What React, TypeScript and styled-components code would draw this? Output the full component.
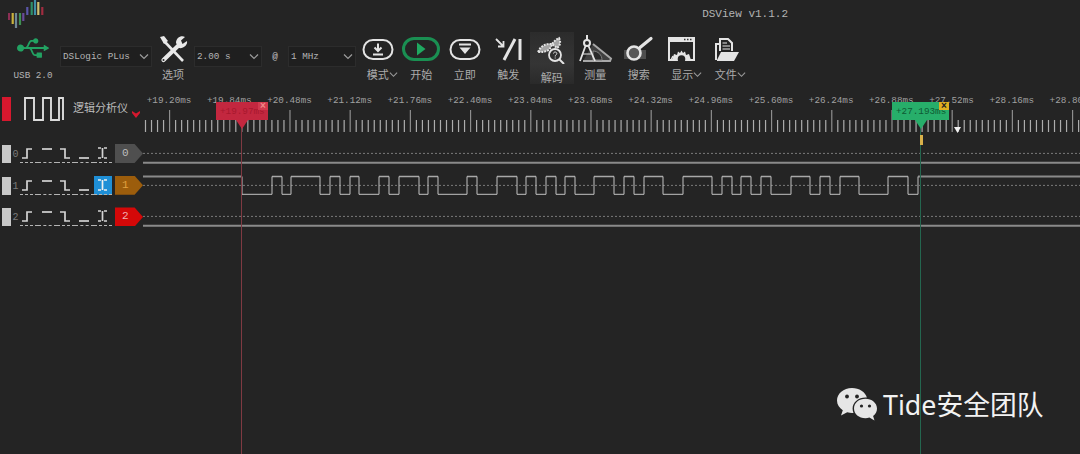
import React from 'react'
import styled, { createGlobalStyle } from 'styled-components'
import { FaUsb } from 'react-icons/fa'

const GlobalStyle = createGlobalStyle`
  html, body {
    margin: 0;
    padding: 0;
    background: #242424;
  }
`

const Page = styled.div`
  position: relative;
  width: 1080px;
  height: 454px;
  overflow: hidden;
  background: #242424;
  color: #c4c4c4;
  font-family: 'Liberation Mono', 'Noto Sans CJK SC', monospace;
  font-size: 9.3px;
`

const TitleBar = styled.header`
  display: flex;
  justify-content: space-between;
  height: 34px;
  padding: 0 292px 0 8px;
`

const Title = styled.div`
  padding-top: 8px;
  font-size: 11px;
  line-height: 13px;
  color: #b4b4b4;
`

const Toolbar = styled.div`
  display: flex;
  height: 56px;
  padding-left: 13px;
`

const UsbGroup = styled.div`
  display: flex;
  flex-direction: column;
  align-items: center;
  flex: none;
  width: 40px;
  margin-right: 7px;
  color: #22a262;

  svg {
    flex: none;
    width: 32px;
    height: 26px;
    margin-top: 1px;
  }

  span {
    margin-top: 8px;
    color: #b4b4b4;
    line-height: 14px;
    white-space: nowrap;
  }
`

const Select = styled.div<{ $w: number }>`
  display: flex;
  align-items: center;
  justify-content: space-between;
  flex: none;
  box-sizing: border-box;
  width: ${(p) => p.$w}px;
  height: 21px;
  margin-top: 12px;
  padding: 0 2px;
  background: #1f1f1f;
  border: 1px solid #2c2c2c;
  color: #b4b4b4;
  white-space: nowrap;
`

const Chevron = styled.svg`
  flex: none;
  width: 10px;
  height: 7px;
  fill: none;
  stroke: #9c9c9c;
  stroke-width: 1.2;
`

const At = styled.span`
  flex: none;
  width: 26px;
  margin-top: 16px;
  text-align: center;
  line-height: 14px;
`

const ToolButton = styled.div<{ $active?: boolean; $w?: number }>`
  display: flex;
  flex-direction: column;
  align-items: center;
  flex: none;
  width: ${(p) => p.$w ?? 43.5}px;
  height: 52px;
  margin-top: -2px;
  padding-top: 2px;
  box-sizing: border-box;
  background: ${(p) => (p.$active ? 'linear-gradient(#2c2c2c, #353535 60%, #2a2a2a)' : 'transparent')};
  font-family: 'Noto Sans CJK SC', sans-serif;
  font-size: 11px;
  color: #ababab;

  svg.icon {
    display: block;
    flex: none;
    width: 38px;
    height: 30px;
    fill: none;
    stroke: #e4e4e4;
    stroke-width: 2;
  }

  span {
    display: flex;
    align-items: center;
    margin-top: ${(p) => (p.$active ? 6 : 3)}px;
    line-height: 15px;
  }

  span ${Chevron} {
    width: 9px;
    margin-right: -9px;
  }
`

const Ruler = styled.div`
  display: flex;
  height: 53px;
`

const ChannelHead = styled.div`
  display: flex;
  align-items: flex-start;
  flex: none;
  width: 143px;
  height: 53px;
  padding-top: 7px;
  box-sizing: border-box;
`

const ModeSwatch = styled.div`
  flex: none;
  width: 9px;
  height: 24px;
  margin: 0 13px 0 2px;
  background: #d6182e;
`

const ModeName = styled.span`
  margin: 3px 0 0 9px;
  font-family: 'Noto Sans CJK SC', sans-serif;
  font-size: 11px;
  line-height: 14px;
  white-space: nowrap;
  color: #bcbcbc;
`

const ModeArrow = styled.svg`
  flex: none;
  width: 8px;
  height: 7px;
  margin: 14px 0 0 4px;
  fill: #d6182e;
`

const Scale = styled.div`
  flex: 1;
  min-width: 0;
  overflow: hidden;
`

const ScaleLabels = styled.div`
  display: flex;
  height: 20px;
  margin-left: -4px;
  padding-top: 5px;
  box-sizing: border-box;
  color: #a0a0a0;
  line-height: 12px;

  span {
    flex: none;
    width: 60.2px;
    text-align: center;
    white-space: nowrap;
  }
`

const Ticks = styled.svg`
  display: block;
  width: 937px;
  height: 33px;
`

const Row = styled.div`
  display: flex;
  height: 31.7px;
`

const ChannelCtl = styled.div`
  display: flex;
  align-items: flex-start;
  flex: none;
  width: 143px;
  padding-top: 1px;
  box-sizing: border-box;
`

const Handle = styled.div`
  flex: none;
  width: 9px;
  height: 18px;
  margin: 1px 0 0 2px;
  background: #c8c8c8;
`

const Index = styled.span`
  flex: none;
  width: 9px;
  margin-top: 5px;
  color: #7c7c7c;
  font-size: 10px;
  text-align: center;
  line-height: 12px;
`

const Triggers = styled.div`
  display: flex;
  flex: none;
  width: 92px;
  height: 20px;
  margin-right: 3px;
`

const TrigCell = styled.div<{ $on?: boolean }>`
  flex: none;
  width: 18.4px;
  height: 18px;
  background: ${(p) => (p.$on ? '#1f8fd6' : 'transparent')};
  border-bottom: 1px dashed #b4b4b4;

  svg {
    display: block;
    width: 18px;
    height: 18px;
    fill: none;
    stroke: ${(p) => (p.$on ? '#f0f0f0' : '#d4d4d4')};
    stroke-width: 1.7;
  }
`

const Tag = styled.div<{ $bg: string; $fg: string }>`
  flex: none;
  width: 28px;
  height: 19px;
  background: ${(p) => p.$bg};
  color: ${(p) => p.$fg};
  clip-path: polygon(0 0, 70% 0, 100% 50%, 70% 100%, 0 100%);
  line-height: 19px;
  text-indent: 7px;
  font-size: 11px;
`

const Trace = styled.svg`
  display: block;
  flex: 1;
  min-width: 0;
  height: 31.7px;
  fill: none;
`

const Cursor = styled.div<{ $x: number; $color: string }>`
  position: absolute;
  left: ${(p) => p.$x}px;
  top: 128px;
  bottom: 0;
  width: 1px;
  background: ${(p) => p.$color};
`

const Flag = styled.div<{ $x: number; $w: number; $tip: number; $bg: string; $fg: string }>`
  position: absolute;
  left: ${(p) => p.$x}px;
  top: 102px;
  width: ${(p) => p.$w}px;
  height: 18px;
  padding-left: 4px;
  box-sizing: border-box;
  background: ${(p) => p.$bg};
  color: ${(p) => p.$fg};
  font-size: 9.3px;
  line-height: 20px;
  white-space: nowrap;

  &::after {
    content: '';
    position: absolute;
    top: 100%;
    left: ${(p) => p.$tip}px;
    border: 6px solid transparent;
    border-top: 9px solid ${(p) => p.$bg};
    border-bottom: 0;
  }
`

const FlagClose = styled.i<{ $bg: string; $fg: string }>`
  position: absolute;
  right: 0;
  top: 0;
  width: 10px;
  height: 8px;
  background: ${(p) => p.$bg};
  color: ${(p) => p.$fg};
  font: bold 10px/8px 'Liberation Sans', sans-serif;
  text-align: center;
`

const TriggerMark = styled.div`
  position: absolute;
  left: 920px;
  top: 135px;
  width: 3px;
  height: 10px;
  background: #d8b04a;
`

const PosMark = styled.svg`
  position: absolute;
  left: 954px;
  top: 127px;
  width: 7px;
  height: 6px;
  fill: #f0f0f0;
`

const Watermark = styled.div`
  position: absolute;
  left: 836px;
  top: 386px;
  display: flex;
  align-items: center;
  gap: 5px;
  color: #f2f2f2;
  font-family: 'Noto Sans', 'Noto Sans CJK SC', sans-serif;
  font-size: 26.8px;
  line-height: 38px;
  white-space: nowrap;

  svg {
    flex: none;
    width: 42px;
    height: 36px;
    fill: #e6e6e6;
  }
`

const scaleValues = [
  '19.20', '19.84', '20.48', '21.12', '21.76', '22.40', '23.04', '23.68',
  '24.32', '24.96', '25.60', '26.24', '26.88', '27.52', '28.16', '28.80',
]

const edges = [
  272, 282, 291, 320, 330, 340, 350, 359, 379, 389, 399, 419, 428, 438, 467, 477,
  497, 517, 526, 536, 546, 556, 565, 575, 594, 614, 624, 634, 644, 663, 683, 712,
  722, 732, 741, 751, 761, 771, 791, 810, 820, 830, 840, 859, 888, 908, 918,
]

const TRACE_LEFT = 143
const TOP_Y = 1.5
const LOW_Y = 19.5

// edges alternate rising, falling, ... after the first drop at the red cursor
const buildWave = () => {
  let low = `M${242 - TRACE_LEFT} ${TOP_Y}V${LOW_Y}`
  let high = ''
  edges.forEach((edge, i) => {
    const x = edge - TRACE_LEFT
    if (i % 2 === 0) {
      low += `H${x}V${TOP_Y}`
      high += `M${x} ${TOP_Y}`
    } else {
      high += `H${x}`
      low += `M${x} ${TOP_Y}V${LOW_Y}`
    }
  })
  return { low, high }
}

const wave = buildWave()

const tickList = Array.from({ length: 156 }, (_, i) => i)

const ChevronDown = () => (
  <Chevron viewBox="0 0 10 7">
    <path d="M1 1.5L5 5.5L9 1.5" />
  </Chevron>
)

const Tools = () => (
  <svg className="icon" viewBox="0 0 38 30">
    <path d="M10 7L29 27" stroke="#e8e8e8" strokeWidth="2.6" />
    <path d="M6 3L10 2L14 7L10 10Z" fill="#e8e8e8" stroke="none" />
    <path d="M9.500 26L25 11" stroke="#e8e8e8" strokeWidth="4.200" strokeLinecap="round" />
    <path d="M22 9C22 4 27 1 31 3L27 6.500L28.500 10L33 7C34 11 29 15 25 14Z" fill="#e8e8e8" stroke="none" />
    <circle cx="9.500" cy="26" r="1" fill="#242424" stroke="none" />
  </svg>
)

const ModeIcon = () => (
  <svg className="icon" viewBox="0 0 38 30">
    <rect x="4.500" y="6" width="29" height="19" rx="9.500" />
    <path d="M19 9.500V16.500M15.500 13.500L19 17L22.500 13.500" />
    <path d="M14 20.500H24" />
  </svg>
)

const StartIcon = () => (
  <svg className="icon" viewBox="0 0 38 30">
    <rect x="1.500" y="4.500" width="35" height="21" rx="10.500" stroke="#1a8f52" strokeWidth="3" />
    <path d="M15 8.500L23.500 15L15 21.500Z" fill="#1fa860" stroke="none" />
  </svg>
)

const InstantIcon = () => (
  <svg className="icon" viewBox="0 0 38 30">
    <rect x="4.500" y="6" width="29" height="19" rx="9.500" />
    <path d="M13 10.500H25" />
    <path d="M13.500 13.500H24.500L19 20Z" fill="#e4e4e4" stroke="none" />
  </svg>
)

const TriggerIcon = () => (
  <svg className="icon" viewBox="0 0 38 30">
    <path d="M7 5L14 12M9 12.500H14.500V7" strokeWidth="1.800" />
    <path d="M15 26L26 5" strokeWidth="3" />
    <path d="M31 5V26" strokeWidth="3" />
  </svg>
)

const DecodeIcon = () => (
  <svg className="icon" viewBox="0 0 38 30" strokeWidth="1.200">
    <path d="M5 18Q9 9 19 10Q17 19 5 18Z" fill="#a4a4a4" strokeDasharray="2 1" />
    <path d="M19 10Q22 6 26 4Q29 10 24 14Z" fill="#a4a4a4" strokeDasharray="2 1" />
    <circle cx="22" cy="21" r="6" fill="#2f2f2f" strokeWidth="1.800" />
    <path d="M20.500 19.500C20.500 17.500 23.800 17.500 23.800 19.500C23.800 20.800 22.200 20.800 22.200 22.500M22.200 23.500V24.500" strokeWidth="1" />
    <path d="M26.500 25.500L31 30" strokeWidth="2" />
  </svg>
)

const MeasureIcon = () => (
  <svg className="icon" viewBox="0 0 38 30" strokeWidth="1.400">
    <path d="M17 10L35 24.500L34 27H7" fill="#404040" stroke="#a8a8a8" />
    <path d="M17 17C22 17 26 21 26 26H17Z" fill="#2a2a2a" stroke="#808080" strokeWidth="1" />
    <path d="M11 1V6" />
    <circle cx="11" cy="9" r="3" />
    <path d="M9.500 12L4 27M12.500 12L19 27" strokeWidth="1.800" />
    <path d="M7 20L15 20" strokeWidth="1" />
  </svg>
)

const SearchIcon = () => (
  <svg className="icon" viewBox="0 0 38 30">
    <rect x="4" y="16" width="22" height="9" fill="#4e4e4e" stroke="none" />
    <circle cx="14" cy="19" r="6.500" strokeWidth="2.600" fill="#575757" />
    <path d="M20 13.500L31 4.500" strokeWidth="3.200" strokeLinecap="round" />
  </svg>
)

const DisplayIcon = () => (
  <svg className="icon" viewBox="0 0 38 30">
    <rect x="6" y="4" width="25" height="22" strokeWidth="2" />
    <path d="M6 3H32V8H6Z" fill="#e4e4e4" stroke="none" />
    <path d="M24 5.500H25.500M27 5.500H28.500M21 5.500H22.500" stroke="#333" strokeWidth="1.500" />
    <path d="M9 26L11 20L14 21L15 17.500L17 19L18.500 16.500L20 19L22 17.500L23 21L26 20L28 26Z" fill="#e4e4e4" stroke="none" />
    <path d="M8 26L10 22" strokeWidth="1.500" />
    <circle cx="18.500" cy="25" r="3.800" fill="#242424" stroke="none" />
  </svg>
)

const FileIcon = () => (
  <svg className="icon" viewBox="0 0 38 30" strokeWidth="1.600">
    <path d="M13 17V5H21L25 9V17" />
    <path d="M15.500 9H20M15.500 12H23M15.500 15H23" strokeWidth="1.200" />
    <path d="M9 26V10H12" />
    <path d="M10 26L14 18H32L27 27H10Z" fill="#e4e4e4" stroke="none" />
  </svg>
)

const logoBars = [
  { x: 1, y1: 13, y2: 20, c: '#8d2f55' },
  { x: 4.700, y1: 13, y2: 24, c: '#c9b23d' },
  { x: 8, y1: 13, y2: 28, c: '#6f8796' },
  { x: 12, y1: 13, y2: 25, c: '#3f8f52' },
  { x: 15.300, y1: 13, y2: 21, c: '#6a4a9a' },
  { x: 19.300, y1: 7, y2: 15, c: '#5a55a8' },
  { x: 23.700, y1: 2, y2: 15, c: '#2f8f6a' },
  { x: 27, y1: 0, y2: 15, c: '#3f8fa8' },
  { x: 30.300, y1: 2, y2: 15, c: '#d0c070' },
  { x: 34.300, y1: 7, y2: 15, c: '#a02c40' },
]

const Logo = () => (
  <svg width="37" height="31" viewBox="0 0 37 31" fill="none" strokeWidth="2.200">
    {logoBars.map((b) => (
      <path key={b.x} d={`M${b.x} ${b.y1}V${b.y2}`} stroke={b.c} />
    ))}
  </svg>
)

const triggerPaths = [
  'M2 14H7V5H12',
  'M4 5H14',
  'M3 5H8V14H13',
  'M4 14H14',
  'M4 4H7M10 4H13M8.500 4V14M4 14H7M10 14H13',
]

const channels = [
  { id: 0, bg: '#4f4f4f', fg: '#bdbdbd', line: 20 },
  { id: 1, bg: '#9c5d0c', fg: '#e0a040', line: 0 },
  { id: 2, bg: '#d40808', fg: '#f0b0b0', line: 20 },
]

const App = () => (
  <Page>
    <GlobalStyle />
    <TitleBar>
      <Logo />
      <Title>DSView v1.1.2</Title>
    </TitleBar>

    <Toolbar>
      <UsbGroup>
        <FaUsb />
        <span>USB 2.0</span>
      </UsbGroup>
      <Select $w={92}>
        DSLogic PLus
        <ChevronDown />
      </Select>
      <ToolButton $w={42}>
        <Tools />
        <span>选项</span>
      </ToolButton>
      <Select $w={68}>
        2.00 s
        <ChevronDown />
      </Select>
      <At>@</At>
      <Select $w={68}>
        1 MHz
        <ChevronDown />
      </Select>
      <ToolButton>
        <ModeIcon />
        <span>
          模式
          <ChevronDown />
        </span>
      </ToolButton>
      <ToolButton>
        <StartIcon />
        <span>开始</span>
      </ToolButton>
      <ToolButton>
        <InstantIcon />
        <span>立即</span>
      </ToolButton>
      <ToolButton>
        <TriggerIcon />
        <span>触发</span>
      </ToolButton>
      <ToolButton $active>
        <DecodeIcon />
        <span>解码</span>
      </ToolButton>
      <ToolButton>
        <MeasureIcon />
        <span>测量</span>
      </ToolButton>
      <ToolButton>
        <SearchIcon />
        <span>搜索</span>
      </ToolButton>
      <ToolButton>
        <DisplayIcon />
        <span>
          显示
          <ChevronDown />
        </span>
      </ToolButton>
      <ToolButton>
        <FileIcon />
        <span>
          文件
          <ChevronDown />
        </span>
      </ToolButton>
    </Toolbar>

    <Ruler>
      <ChannelHead>
        <ModeSwatch />
        <svg width="40" height="24" viewBox="0 0 40 24" fill="none" stroke="#dcdcdc" strokeWidth="1.900">
          <path d="M1 23V1H10V23H19V1H27V23H35V1H39V23" />
        </svg>
        <ModeName>逻辑分析仪</ModeName>
        <ModeArrow viewBox="0 0 8 7">
          <path d="M0 0L4 2.500L8 0V2L4 7L0 2Z" />
        </ModeArrow>
      </ChannelHead>
      <Scale>
        <ScaleLabels>
          {scaleValues.map((v) => (
            <span key={v}>+{v}ms</span>
          ))}
        </ScaleLabels>
        <Ticks viewBox="0 0 937 33">
          {tickList.map((i) => {
            const major = i % 10 === 4
            return (
              <path
                key={i}
                d={`M${2.500 + i * 6.020} ${major ? 0 : 10}V22`}
                stroke={major ? '#8e8e8e' : '#adadad'}
                strokeWidth="1.200"
              />
            )
          })}
        </Ticks>
      </Scale>
    </Ruler>

    {channels.map((c) => (
      <Row key={c.id}>
        <ChannelCtl>
          <Handle />
          <Index>{c.id}</Index>
          <Triggers>
            {triggerPaths.map((d, i) => (
              <TrigCell key={d} $on={c.id === 1 && i === 4}>
                <svg viewBox="0 0 18 18">
                  <path d={d} />
                </svg>
              </TrigCell>
            ))}
          </Triggers>
          <Tag $bg={c.bg} $fg={c.fg}>
            {c.id}
          </Tag>
        </ChannelCtl>
        <Trace viewBox="0 0 937 32" preserveAspectRatio="none">
          <path d="M0 10.500H937" stroke="#7a7a7a" strokeWidth="1" strokeDasharray="2 2" />
          {c.line ? (
            <path d={`M0 ${c.line}H937`} stroke="#8a8a8a" strokeWidth="2" />
          ) : (
            <>
              <path d={`M0 ${TOP_Y}H${242 - TRACE_LEFT}M${918 - TRACE_LEFT} ${TOP_Y}H937`} stroke="#8a8a8a" strokeWidth="2" />
              <path d={wave.high} stroke="#a8a8a8" strokeWidth="1.300" />
              <path d={wave.low} stroke="#c4c4c4" strokeWidth="1" />
            </>
          )}
        </Trace>
      </Row>
    ))}

    <Cursor $x={241} $color="#7f3a42" />
    <Cursor $x={920} $color="#24664f" />
    <Flag $x={216} $w={52} $tip={20} $bg="#c3273f" $fg="#a8182e">
      +19.97ms
      <FlagClose $bg="#d13a4e" $fg="#e88">×</FlagClose>
    </Flag>
    <Flag $x={892} $w={57} $tip={23} $bg="#27ae6a" $fg="#0e5a34">
      +27.193ms
      <FlagClose $bg="#e0b020" $fg="#222">×</FlagClose>
    </Flag>
    <TriggerMark />
    <PosMark viewBox="0 0 7 6">
      <path d="M0 0H7L3.500 6Z" />
    </PosMark>

    <Watermark>
      <svg viewBox="0 0 42 36">
        <path d="M16 1C7.500 1 1 6.700 1 13.500C1 17.500 3.300 21 6.800 23.300L5 28.500L11.200 25.300C13 25.800 14.600 26 16 26C16.500 26 17 26 17.500 25.900C16.900 24.400 16.600 22.900 16.600 21.500C16.600 15.300 22.500 10.500 29.500 10.500C30 10.500 30.400 10.500 30.900 10.600C29.300 5 23.300 1 16 1Z" />
        <path d="M41 21.500C41 15.900 35.700 11.800 29.500 11.800C22.900 11.800 18 15.900 18 21.500C18 27.100 22.900 31.200 29.500 31.200C30.800 31.200 32.100 31 33.400 30.600L38.500 33.500L37.100 29C39.600 27.100 41 24.500 41 21.500Z" />
        <circle cx="11" cy="9.500" r="1.900" fill="#242424" />
        <circle cx="21" cy="9.500" r="1.900" fill="#242424" />
        <circle cx="25.500" cy="19" r="1.600" fill="#242424" />
        <circle cx="33.500" cy="19" r="1.600" fill="#242424" />
      </svg>
      Tide安全团队
    </Watermark>
  </Page>
)

export default App
